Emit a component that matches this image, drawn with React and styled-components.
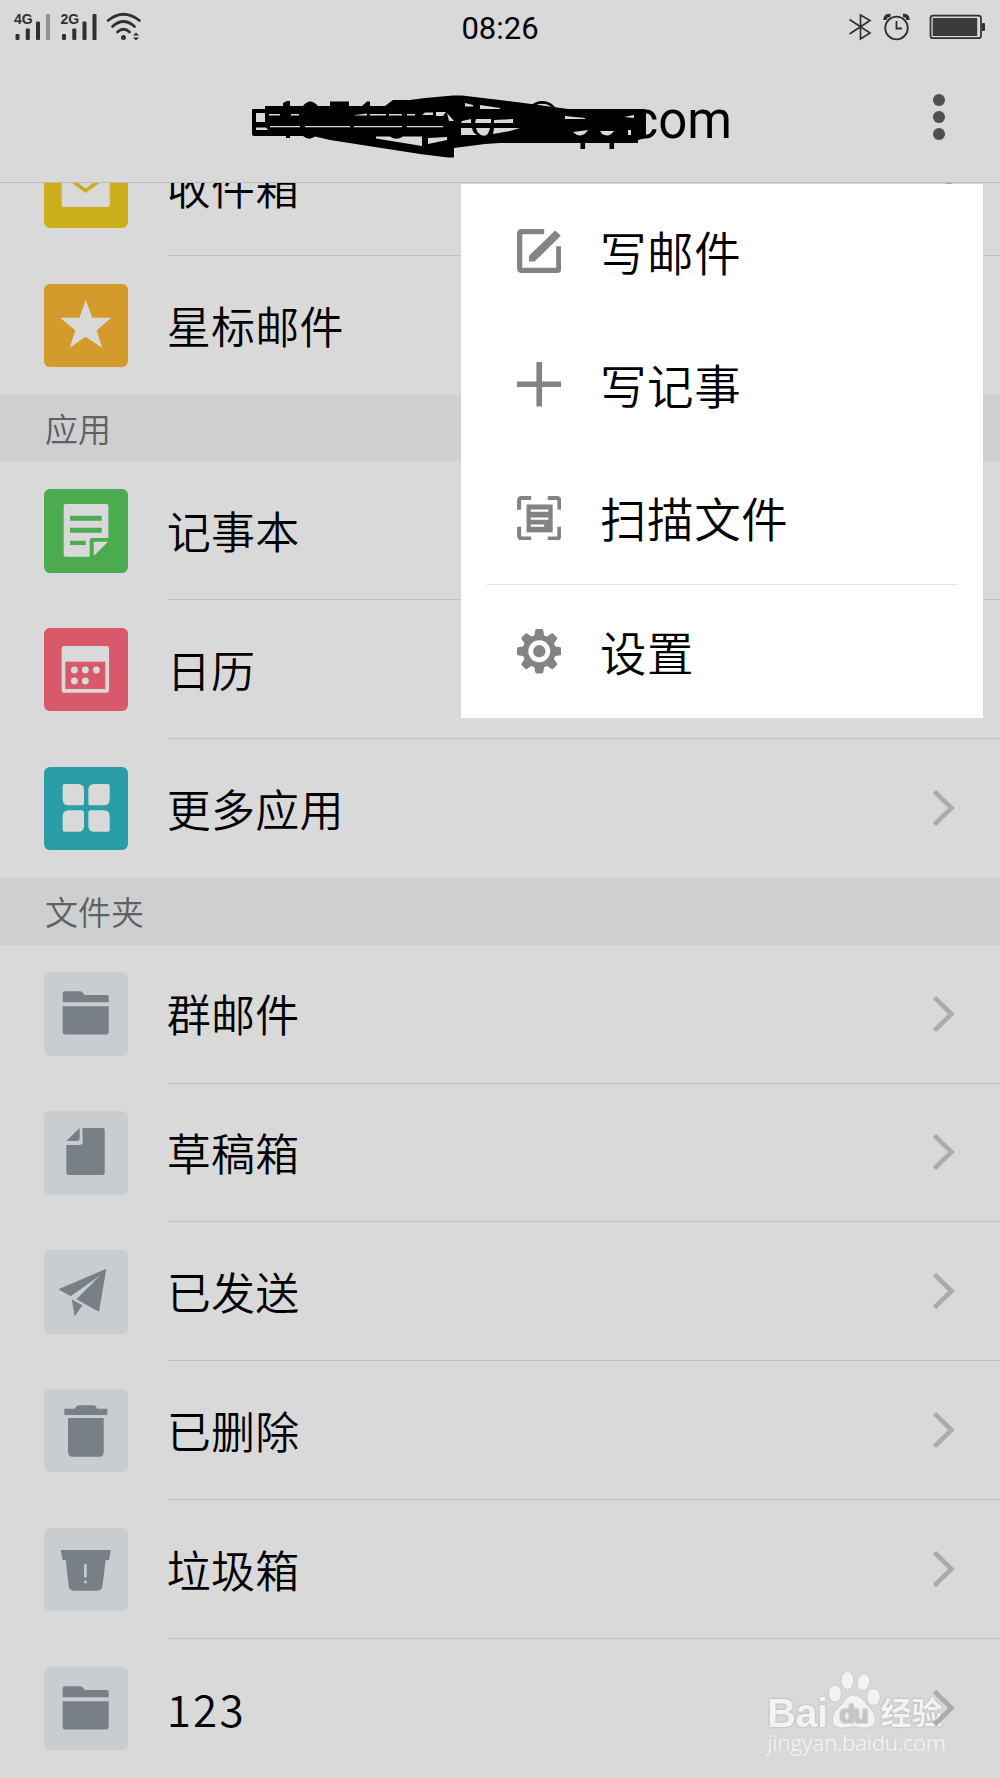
import React from "react";
import styled, { createGlobalStyle } from "styled-components";

const GlobalStyle = createGlobalStyle`
  * { box-sizing: border-box; }
  body { margin: 0; background: #d9d9d9; }
`;

const Screen = styled.div`
  position: relative;
  width: 1000px;
  height: 1778px;
  overflow: hidden;
  display: flex;
  flex-direction: column;
  background: #d9d9d9;
  color: #000;
  font-family: "Noto Sans CJK SC", sans-serif;
`;

const StatusBar = styled.div`
  display: grid;
  grid-template-columns: 1fr auto 1fr;
  align-items: center;
  height: 51px;
  flex: none;
  border-bottom: 1px solid #d5d5d5;
`;

const StatusGroup = styled.div`
  display: flex;
  align-items: center;
  height: 50px;
  justify-content: ${(p) => (p.$end ? "flex-end" : "flex-start")};
`;

const Clock = styled.div`
  font: 400 31px/50px Roboto, sans-serif;
  padding-top: 4px;
`;

const Header = styled.header`
  position: relative;
  display: flex;
  align-items: center;
  justify-content: flex-end;
  height: 132px;
  flex: none;
  border-bottom: 1px solid #bcbcbc;
`;

const Account = styled.h1`
  margin: 0 195px 0 0;
  font: 400 51px/60px Roboto, sans-serif;
  padding-top: 8px;
`;

const AtSign = styled.span`
  font-size: 42px;
  line-height: 1;
  vertical-align: 7px;
`;

const Scribble = styled.svg`
  position: absolute;
  left: 245px;
  top: 39px;
`;

const MoreButton = styled.button`
  display: flex;
  flex-direction: column;
  align-items: center;
  gap: 5.3px;
  width: 24px;
  margin: 1px 49px 0 0;
  padding: 0;
  border: 0;
  background: none;
`;

const Dot = styled.span`
  width: 11.6px;
  height: 11.6px;
  border-radius: 50%;
  background: #505050;
`;

const Viewport = styled.main`
  flex: 1;
  min-height: 0;
  overflow: hidden;
`;

const List = styled.div`
  display: flex;
  flex-direction: column;
  margin-top: -66px;
`;

const SectionTitle = styled.h2`
  margin: 0;
  height: 66.6px;
  flex: none;
  padding: 0 0 0 45px;
  background: #cecfd1;
  color: #606060;
  font-size: 33px;
  font-weight: 350;
  line-height: 66px;
`;

const Row = styled.div`
  display: flex;
  align-items: center;
  height: 138.9px;
  flex: none;
  padding-left: 44.3px;
`;

const Tile = styled.svg`
  width: 83.4px;
  height: 83.4px;
  flex: none;
  border-radius: 6px;
  background: ${(p) => p.$bg};
  fill: ${(p) => p.$fg};
`;

const RowBody = styled.div`
  display: flex;
  align-items: center;
  justify-content: space-between;
  flex: 1;
  height: 100%;
  margin-left: 39px;
  padding-right: 45px;
  border-bottom: 1px solid ${(p) => (p.$last ? "transparent" : "#c2c2c3")};
`;

const Label = styled.span`
  font-size: 44px;
  font-weight: 350;
  line-height: 60px;
  padding-bottom: 0.5px;
  letter-spacing: ${(p) => (p.$wide ? "2.2px" : "0.3px")};
`;

const Chevron = styled.svg`
  position: relative;
  z-index: 1;
  width: 23px;
  height: 38px;
  fill: none;
  stroke: #aaabae;
  stroke-width: 4.6;
`;

const Menu = styled.nav`
  position: absolute;
  z-index: 2;
  left: 461px;
  top: 184px;
  width: 522px;
  height: 533.5px;
  display: flex;
  flex-direction: column;
  padding: 0 25px;
  background: #fff;
`;

const MenuItem = styled.div`
  flex: 1;
  display: flex;
  align-items: center;
  padding-left: 30.5px;
  border-top: 1px solid ${(p) => (p.$divided ? "#e6e6e6" : "transparent")};
`;

const MenuIcon = styled.svg`
  width: 44.5px;
  height: 44.5px;
  margin-right: 39px;
  color: #838383;
`;

const MenuLabel = styled.span`
  font-size: 46.5px;
  font-weight: 350;
  line-height: 60px;
  padding-bottom: 1px;
  letter-spacing: 0.6px;
`;

const Watermark = styled.div`
  position: absolute;
  left: 767px;
  top: 1668px;
  width: 200px;
  color: #f3f3f3;
  text-shadow: 0 0 2px #b4b4b4, 0 0 2px #b4b4b4;
`;

const Brand = styled.div`
  display: flex;
  align-items: flex-end;
  height: 62px;
`;

const BrandText = styled.span`
  font: 700 40px/40px "Liberation Sans", sans-serif;
  letter-spacing: -0.6px;
  margin-bottom: -3px;
`;

const BrandCjk = styled.span`
  font: 700 31px/36px "Noto Sans CJK SC", sans-serif;
  margin: 0 0 1px -1px;
`;

const Site = styled.div`
  font: 400 22.4px/26px "Open Sans", sans-serif;
  letter-spacing: -0.7px;
  text-shadow: 0 0 1px #bbb;
`;

const Signal = ({ x, name, weak }) => (
  <g transform={`translate(${x} 0)`}>
    <text x="0" y="22" fontSize="14" fontWeight="700" fontFamily="Liberation Sans, sans-serif">{name}</text>
    <rect x="1.5" y="32" width="4" height="6" rx="1" />
    <rect x="11.8" y="26.5" width="4" height="11.5" rx="1" />
    <rect x="22" y="19.5" width="4" height="18.5" rx="1" />
    <rect x="32" y="12" width="4" height="26" rx="1" fill={weak ? "#909090" : undefined} />
  </g>
);

const glyphs = {
  inbox: (
    <>
      <rect x="53" y="58" width="144" height="128" rx="7" />
      <path d="M50 83L125 137L200 83" fill="none" stroke="#ccae1b" strokeWidth="11" />
    </>
  ),
  star: <path d="M125 48L145 101H202L158 139L174 191L125 158L77 191L94 139L48 101H106Z" />,
  note: (
    <>
      <path d="M65 45H187Q193 45 193 51V147H145Q137 147 137 155V203H65Q59 203 59 197V51Q59 45 65 45Z" />
      <path d="M149 162Q149 158 153 158H192L149 201Z" />
      <path d="M78 80h95v15H78zM78 116h95v15H78zM78 155h47v13H78z" fill="#4caa50" />
    </>
  ),
  calendar: (
    <>
      <rect x="53" y="54" width="142" height="140" rx="7" />
      <rect x="64" y="101" width="120" height="82" fill="#d85a6a" />
      {[[91, 126], [124, 126], [157, 126], [91, 159], [124, 159]].map(([x, y]) => (
        <circle key={`${x}-${y}`} cx={x} cy={y} r="10.3" />
      ))}
    </>
  ),
  more: (
    <>
      {[[1, 1, 88, 83], [-1, 1, 165, 83], [1, -1, 88, 162], [-1, -1, 165, 162]].map(([a, b, x, y]) => (
        <path
          key={`${x}-${y}`}
          transform={`translate(${x} ${y}) scale(${a} ${b})`}
          d="M-26-32H14Q32-32 32-14V24Q32 32 24 32H-14Q-32 32-32 14V-26Q-32-32-26-32Z"
        />
      ))}
    </>
  ),
  folder: (
    <path d="M56 91V64Q56 58 62 58H109Q112 58 114 60L122 69H188Q194 69 194 75V91ZM56 103H194V181Q194 187 188 187H62Q56 187 56 181Z" />
  ),
  draft: (
    <path d="M115 51H176Q182 51 182 57V186Q182 192 176 192H73Q67 192 67 186V102H106Q116 102 116 92ZM67 90L107 51V82Q107 90 99 90Z" />
  ),
  sent: <path d="M43 118L187 56L165 185L97 148L169 76L80 139ZM83 148L115 166L92 199Z" />,
  trash: (
    <path d="M61 59H93Q97 49 104 49H148Q156 49 159 59H190V78H61ZM72 87H179V189Q179 203 165 203H86Q72 203 72 189Z" />
  ),
  junk: (
    <>
      <path d="M50 66H200L195 96H185L175 175Q173 188 160 188H90Q76 188 74 175L65 96H56Z" />
      <path d="M124 112V145" stroke="#c9cdd0" strokeWidth="8" strokeLinecap="round" />
      <circle cx="124" cy="162" r="4.5" fill="#c9cdd0" />
    </>
  ),
};

const sections = [
  {
    rows: [
      { label: "收件箱", icon: "inbox", bg: "#ccae1b" },
      { label: "星标邮件", icon: "star", bg: "#d49b2c" },
    ],
  },
  {
    title: "应用",
    rows: [
      { label: "记事本", icon: "note", bg: "#4caa50" },
      { label: "日历", icon: "calendar", bg: "#d85a6a" },
      { label: "更多应用", icon: "more", bg: "#2b9da5" },
    ],
  },
  {
    title: "文件夹",
    rows: [
      { label: "群邮件", icon: "folder" },
      { label: "草稿箱", icon: "draft" },
      { label: "已发送", icon: "sent" },
      { label: "已删除", icon: "trash" },
      { label: "垃圾箱", icon: "junk" },
      { label: "123", icon: "folder", wide: true },
    ],
  },
];

const menuItems = [
  {
    label: "写邮件",
    icon: (
      <>
        <path d="M77 7.5H14Q7.5 7.5 7.5 14V110Q7.5 117.5 14 117.5H112Q118.5 117.5 118.5 111V49" fill="none" stroke="currentColor" strokeWidth="15" />
        <path d="M108 4L124 19L50 92H34V76Z" fill="currentColor" />
      </>
    ),
  },
  {
    label: "写记事",
    icon: <path d="M63 0V126M0 63H126" stroke="currentColor" strokeWidth="16" />,
  },
  {
    label: "扫描文件",
    icon: (
      <>
        <path d="M40 5.5H14Q6 5.5 6 14V39M87 5.5H112Q120 5.5 120 14V39M6 87V112Q6 120.5 14 120.5H40M120 87V112Q120 120.5 112 120.5H87" fill="none" stroke="currentColor" strokeWidth="11.5" />
        <path d="M27 24H101V103H27Z" fill="currentColor" />
        <path d="M39 41.500H89M39 64H89M39 84H77" stroke="#fff" strokeWidth="6.500" />
      </>
    ),
  },
  {
    label: "设置",
    divided: true,
    icon: (
      <>
        <circle cx="63" cy="63" r="39" fill="none" stroke="currentColor" strokeWidth="16" />
        <circle cx="63" cy="63" r="17.5" fill="currentColor" />
        {[0, 45, 90, 135, 180, 225, 270, 315].map((angle) => (
          <path key={angle} transform={`rotate(${angle} 63 63)`} d="M48 24L52 3Q53 0 56 0H70Q73 0 74 3L78 24Z" fill="currentColor" />
        ))}
      </>
    ),
  },
];

export default function App() {
  return (
    <Screen>
      <GlobalStyle />
      <StatusBar>
        <StatusGroup>
          <svg width="150" height="50" fill="#303030">
            <Signal x={14} name="4G" weak />
            <Signal x={60.500} name="2G" />
            <g fill="none" stroke="#303030" strokeWidth="2.700" strokeLinecap="round">
              <path d="M108 18.500Q123.500 6 139.500 18.500" />
              <path d="M112.500 24.500Q123.500 14.500 134.500 24.500" />
              <path d="M117.500 30Q123.500 24.500 129.500 30" />
            </g>
            <circle cx="123.500" cy="35.500" r="2.500" />
            <path d="M133 33.500L136 30.500L139 33.500ZM133 35.500H139L136 38.500Z" />
          </svg>
        </StatusGroup>
        <Clock>08:26</Clock>
        <StatusGroup $end>
          <svg width="160" height="50" viewBox="840 0 160 50" fill="none" stroke="#303030">
            <path d="M849.500 17.500L870 31L860.500 37V13L870 18.500L849.500 32" strokeWidth="1.700" />
            <circle cx="896.500" cy="26" r="11.300" strokeWidth="1.800" />
            <path d="M896.500 19V26.500H902" strokeWidth="1.800" />
            <path d="M885 18Q885 13 890.500 13.500M903 13.500Q908 13 908 18" strokeWidth="3.500" />
            <rect x="930.500" y="13.700" width="50.500" height="22.500" rx="2.500" strokeWidth="1.700" />
            <rect x="932.700" y="16" width="44.500" height="18" fill="#3b3b3b" stroke="none" />
            <rect x="982" y="21" width="3" height="8" rx="1" fill="#303030" stroke="none" />
          </svg>
        </StatusGroup>
      </StatusBar>

      <Header>
        <Account>
          <AtSign>@</AtSign>qq.com
        </Account>
        <Scribble width="410" height="75" viewBox="245 90 410 75">
          <path d="M252 110Q252 109 253 109H265V106H283V103L287 101H290V106H303Q310 97 318 106H330V101.500H349V106H362L367 101.500H370V106H385L393 100H410L425 98L453 95.500H462L520 102.500L568 109H644Q646 109 646 111V138L638 140V143H500L485 144L454 148V157.500H448L420 154L330 140L315 136.500Q309 141 303 136H290V138H286V136H254Q252 136 252 134Z" />
          <g fill="#d9d9d9">
            <path d="M256 113H265V122H256ZM256 127.500H266L268 130H256Z" />
            <path d="M269 114H280V115.500H269ZM291 114H299V115.500H291ZM355 115L365 113.800H367V115.500H355ZM370 114H386V115.500H370ZM389 114H402V115.500H389ZM407 114H415V115.500H407ZM425 112.500H433V115H422ZM436 112H446L443 116H436Z" />
            <path d="M270 126H300V127.200H270ZM305 126H350V127.200H305ZM354 126H402V127.200H354ZM407 126H443V127.200H407Z" />
            <path d="M376 136.500H390Q396 141 403 136.500H422V146L376 138.500ZM428 138L447 137V140L428 144ZM447 113L454 121H449Z" />
            <path d="M462 121L471 119V123H461ZM476 119H491V123H475ZM494 120L513 119V123H494ZM461 128H472Q473 134 478 135H461ZM476 128H490Q488 138 481 135Q477 133 476 128ZM494 128H520L510 131L493 134Z" />
            <path d="M465 103L473 105V106.500H465ZM480 105L500 108V109H480ZM565 116L585 118V119H565ZM573 132L588 130Q584 137 577 135ZM600 131H614Q609 138 602 134ZM624 117L634 115V118ZM628 130H631V135H628Z" />
          </g>
        </Scribble>
        <MoreButton aria-label="菜单">
          <Dot />
          <Dot />
          <Dot />
        </MoreButton>
      </Header>

      <Viewport>
        <List>
          {sections.map((section, s) => (
            <React.Fragment key={s}>
              {section.title && <SectionTitle>{section.title}</SectionTitle>}
              {section.rows.map((row, i) => (
                <Row key={row.label}>
                  <Tile viewBox="0 0 250 250" $bg={row.bg || "#c9cdd0"} $fg={row.bg ? "#d9d9d9" : "#787f85"}>
                    {glyphs[row.icon]}
                  </Tile>
                  <RowBody $last={i === section.rows.length - 1}>
                    <Label $wide={row.wide}>{row.label}</Label>
                    <Chevron viewBox="0 0 23 38">
                      <path d="M2.500 2.500L19.500 19L2.500 35.500" />
                    </Chevron>
                  </RowBody>
                </Row>
              ))}
            </React.Fragment>
          ))}
        </List>
      </Viewport>

      <Watermark>
        <Brand>
          <BrandText>Bai</BrandText>
          <svg width="54" height="62" viewBox="0 0 54 62" fill="#f3f3f3" stroke="#c4c4c4" strokeWidth="0.800">
            <ellipse cx="8" cy="25.500" rx="6.500" ry="8.500" />
            <ellipse cx="20.500" cy="12.500" rx="6.300" ry="9" />
            <ellipse cx="36.500" cy="14" rx="6.500" ry="8.500" transform="rotate(12 36.500 14)" />
            <ellipse cx="46.500" cy="29" rx="6.800" ry="8.500" />
            <path d="M27 27C34 27 37 34 42 39C51 47 51 60 38 60C32 60 31 59 27 59C22 59 20 60 15 60C3 60 3 47 11 40C17 35 19 27 27 27Z" />
            <text x="12.500" y="55" fontSize="25" fontWeight="700" fontFamily="Liberation Sans, sans-serif" fill="#c6c6c6" stroke="none" textLength="29">du</text>
          </svg>
          <BrandCjk>经验</BrandCjk>
        </Brand>
        <Site>jingyan.baidu.com</Site>
      </Watermark>

      <Menu>
        {menuItems.map((item) => (
          <MenuItem key={item.label} $divided={item.divided}>
            <MenuIcon viewBox="0 0 126 126">{item.icon}</MenuIcon>
            <MenuLabel>{item.label}</MenuLabel>
          </MenuItem>
        ))}
      </Menu>
    </Screen>
  );
}
